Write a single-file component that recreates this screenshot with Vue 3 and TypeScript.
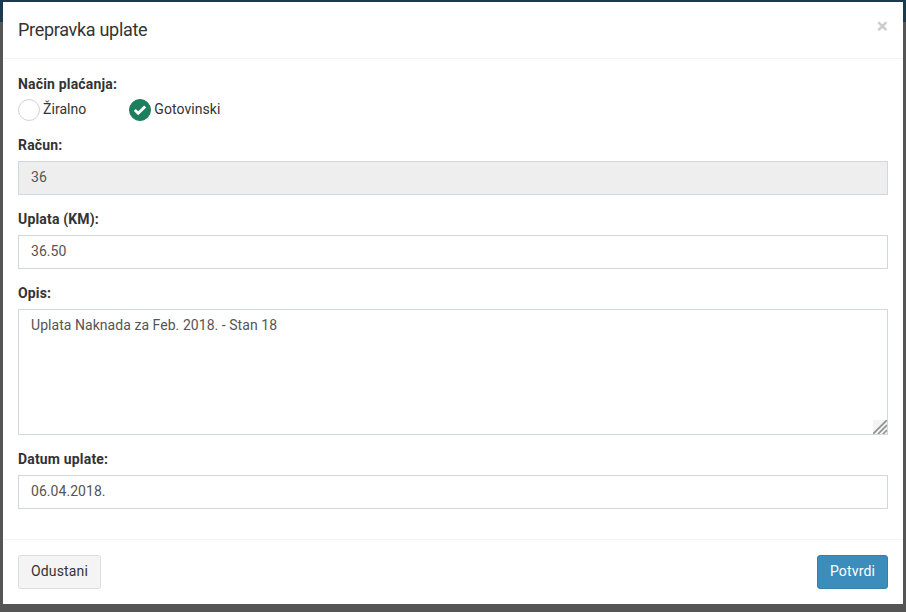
<script setup lang="ts">
import { ref } from 'vue'
const amount = ref('36.50')
const note = ref('Uplata Naknada za Feb. 2018. - Stan 18')
const date = ref('06.04.2018.')
</script>

<template>
  <div class="page">
    <div class="modal">
      <header class="head">
        <h4 class="title">Prepravka uplate</h4>
        <span class="close">×</span>
      </header>
      <div class="body">
        <div class="group first">
          <label class="lbl">Način plaćanja:</label>
          <div class="radios">
            <span class="radio">
              <span class="circle"></span>
              <span class="rtext">Žiralno</span>
            </span>
            <span class="radio">
              <span class="circle on">
                <svg width="14" height="12" viewBox="0 0 14 12"><path d="M1.8 6 5.2 9.3 12.2 2.4" fill="none" stroke="#fff" stroke-width="2.8" /></svg>
              </span>
              <span class="rtext">Gotovinski</span>
            </span>
          </div>
        </div>
        <div class="group">
          <label class="lbl">Račun:</label>
          <input class="ctl" value="36" disabled />
        </div>
        <div class="group">
          <label class="lbl">Uplata (KM):</label>
          <input class="ctl" v-model="amount" />
        </div>
        <div class="group">
          <label class="lbl">Opis:</label>
          <div class="area-wrap">
            <textarea class="ctl area" v-model="note"></textarea>
            <svg class="grip" width="14" height="14" viewBox="0 0 14 14">
              <rect width="14" height="14" fill="#f4f4f4" />
              <path d="M0 14 14 0M5 14 14 5M10 14 14 10" stroke="#909090" stroke-width="1.7" fill="none" />
            </svg>
          </div>
        </div>
        <div class="group">
          <label class="lbl">Datum uplate:</label>
          <input class="ctl" v-model="date" />
        </div>
      </div>
      <footer class="foot">
        <button class="btn">Odustani</button>
        <button class="btn primary">Potvrdi</button>
      </footer>
    </div>
  </div>
</template>

<style scoped>
.page {
  height: 612px;
  box-sizing: border-box;
  padding: 2px 3px 8px;
  background: linear-gradient(#1a3a4f 0 22px, #555 22px);
  font-family: Roboto, "Liberation Sans", sans-serif;
  font-size: 14px;
  letter-spacing: 0.05px;
  color: #333;
}
.modal {
  height: 602px;
  background: #fff;
  display: flex;
  flex-direction: column;
}
.head {
  height: 57px;
  box-sizing: border-box;
  padding: 0 15px;
  border-bottom: 1px solid #f4f4f4;
  display: flex;
  align-items: center;
  justify-content: space-between;
}
.title {
  margin: -2px 0 0;
  font-size: 18px;
  letter-spacing: -0.3px;
  font-weight: 400;
  color: #333;
}
.close {
  font-size: 21px;
  font-weight: 700;
  color: #000;
  opacity: 0.2;
  margin-top: -8px;
}
.body {
  flex: 1;
  padding: 15px 15px 0;
}
.group { margin-bottom: 14px; }
.lbl {
  display: block;
  font-weight: 700;
  letter-spacing: 0.17px;
  line-height: 20px;
  margin-bottom: 6px;
}
.first .lbl { margin-bottom: 5px; }
.radios { display: flex; gap: 43px; height: 22px; }
.radio { display: flex; align-items: center; gap: 3px; line-height: 20px; }
.rtext { margin-top: -2px; }
.circle {
  width: 22px;
  height: 22px;
  box-sizing: border-box;
  border-radius: 50%;
  border: 1px solid #d3d3d3;
  display: flex;
  align-items: center;
  justify-content: center;
}
.circle.on { background: #1c7e5c; border-color: #1c7e5c; }
.ctl {
  display: block;
  width: 100%;
  height: 34px;
  box-sizing: border-box;
  padding: 5px 12px 7px;
  border: 1px solid #d2d6de;
  background: #fff;
  font: inherit;
  letter-spacing: inherit;
  color: #555;
  line-height: 20px;
  border-radius: 0;
  outline: none;
}
.ctl:disabled { background: #eee; opacity: 1; }
.area-wrap { position: relative; }
.area { height: 126px; resize: none; }
.grip { position: absolute; right: 1px; bottom: 1px; }
.foot {
  height: 65px;
  box-sizing: border-box;
  padding: 15px;
  border-top: 1px solid #f4f4f4;
  display: flex;
  justify-content: space-between;
}
.btn {
  height: 34px;
  padding: 5px 12px 7px;
  font: inherit;
  letter-spacing: 0.15px;
  line-height: 20px;
  color: #333;
  background: #f4f4f4;
  border: 1px solid #ddd;
  border-radius: 3px;
}
.btn.primary {
  background: #3c8dbc;
  border-color: #367fa9;
  color: #fff;
}
</style>
